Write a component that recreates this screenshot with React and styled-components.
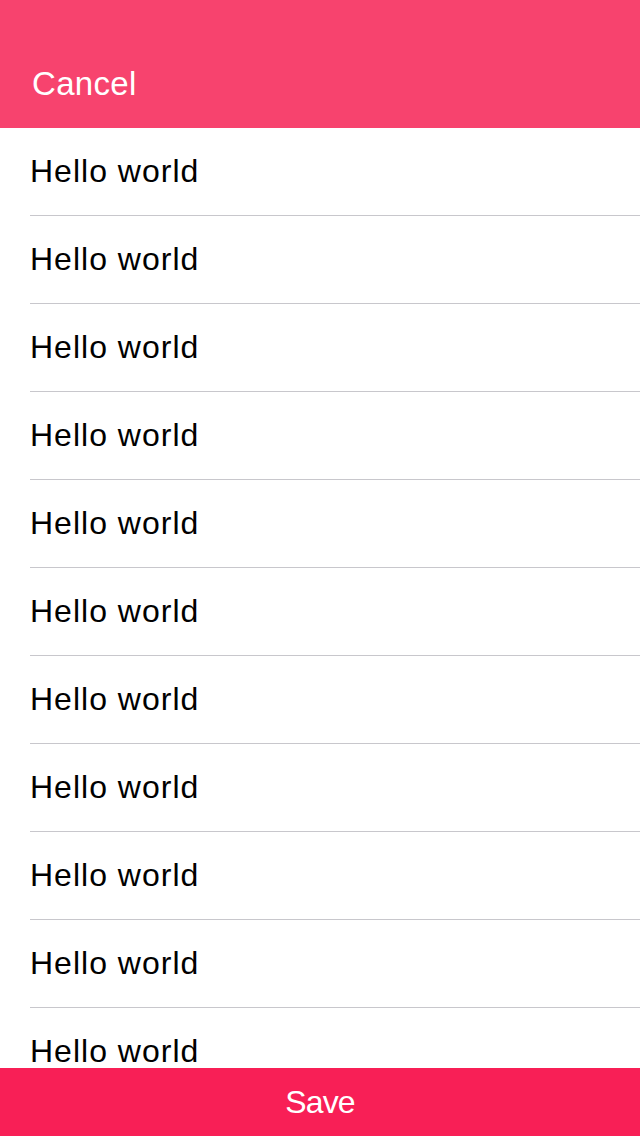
import React from "react";
import styled, { createGlobalStyle } from "styled-components";

const Global = createGlobalStyle`
  html, body { margin: 0; padding: 0; background: #fff; }
  body { font-family: "Liberation Sans", Arial, sans-serif; }
  * { box-sizing: border-box; }
`;

const Screen = styled.div`
  display: flex;
  flex-direction: column;
  height: 100vh;
  width: 100%;
  overflow: hidden;
`;

const Header = styled.header`
  flex: 0 0 128px;
  background: #f7436e;
  padding: 67px 0 0 32px;
`;

const CancelButton = styled.button`
  border: 0;
  background: none;
  padding: 0;
  color: #fff;
  font-family: inherit;
  font-size: 33px;
  line-height: 33px;
  letter-spacing: 0.3px;
  cursor: pointer;
`;

const List = styled.ul`
  flex: 1 1 auto;
  margin: 0;
  padding: 0;
  list-style: none;
  overflow: hidden;
`;

const Row = styled.li`
  display: flex;
  align-items: center;
  height: 88px;
  margin-left: 30px;
  border-bottom: 1px solid #c8c7cc;
  font-size: 32px;
  letter-spacing: 1px;
  color: #000;
`;

const SaveBar = styled.button`
  flex: 0 0 68px;
  display: flex;
  align-items: center;
  justify-content: center;
  border: 0;
  width: 100%;
  background: #f81f56;
  color: #fff;
  font-family: inherit;
  font-size: 32px;
  letter-spacing: -0.8px;
  cursor: pointer;
`;

const items = Array.from({ length: 11 }, () => "Hello world");

export default function App() {
  return (
    <Screen>
      <Global />
      <Header>
        <CancelButton>Cancel</CancelButton>
      </Header>
      <List>
        {items.map((t, i) => (
          <Row key={i}>{t}</Row>
        ))}
      </List>
      <SaveBar>Save</SaveBar>
    </Screen>
  );
}
